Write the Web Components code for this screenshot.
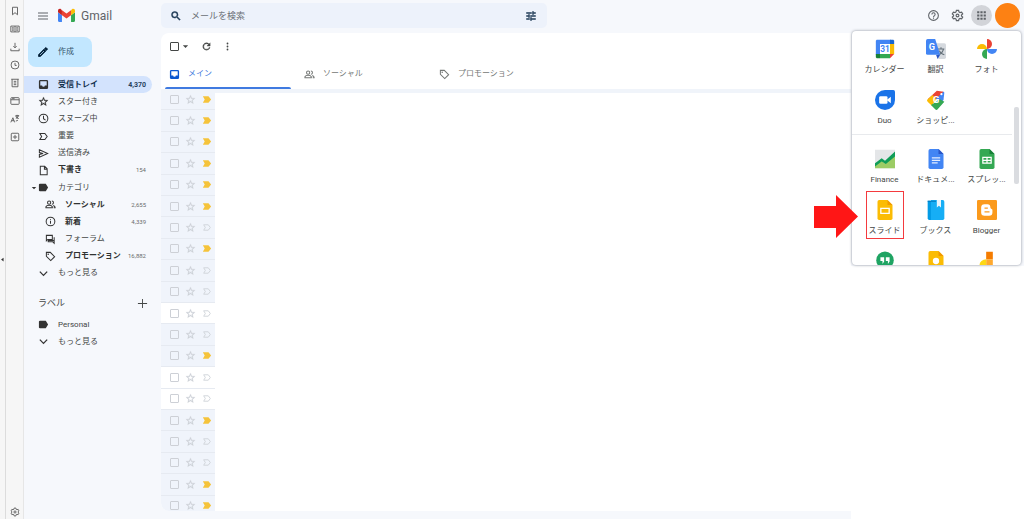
<!DOCTYPE html>
<html lang="ja">
<head>
<meta charset="utf-8">
<title>Gmail</title>
<style>
body { margin: 0; background: #fff; color: #444746; font: 8px/12px Roboto, "Noto Sans CJK JP", sans-serif; }
</style>
</head>
<body>
<mail-app></mail-app>
<script>
const ICONS = {
  bookmark: '<path class="s" d="M6 3h12v18l-6-5-6 5z"/>',
  book: '<path class="s" d="M2 5h20v14H2zM12 5v14M5 9h4M5 12h4M5 15h4M15 9h4M15 12h4M15 15h4"/>',
  download: '<path class="s" d="M12 2v12M8 10l4 4 4-4M2 16v5h20v-5"/>',
  history: '<rect class="s" x="3" y="3" width="18" height="18" rx="7"/><path class="s" d="M12 7v6h4"/>',
  notes: '<path class="s" d="M3 3h18M5 3v18h14V3M9 8h6M9 12h6M9 16h6"/>',
  window: '<rect class="s" x="2" y="4" width="20" height="16" rx="2"/><path class="s" d="M2 9h20M5 6.500h6"/>',
  lang: '<path class="s" d="M2 20l5-11 4 11M4 16h6M13 4h9M17 2v9M14 10c4-1 6-3 6-6M14 5c1 3 4 5 7 6M14 17l5-2"/>',
  plusbox: '<rect class="s" x="3" y="3" width="18" height="18" rx="2"/><path class="s" d="M12 7v10M7 12h10"/>',
  menu: '<path d="M2 5h20v2H2zm0 6h20v2H2zm0 6h20v2H2z"/>',
  search: '<path d="M15.500 14h-.79l-.28-.27A6.470 6.470 0 0 0 16 9.500 6.500 6.500 0 1 0 9.500 16c1.610 0 3.090-.59 4.230-1.570l.27.28v.79l5 4.990L20.490 19l-4.990-5zm-6 0a4.500 4.500 0 1 1 0-9 4.500 4.500 0 0 1 0 9z" stroke="currentColor" stroke-width="1"/>',
  tune: '<path d="M3 17v2h6v-2H3zM3 5v2h10V5H3zm10 16v-2h8v-2h-8v-2h-2v6h2zM7 9v2H3v2h4v2h2V9H7zm14 4v-2H11v2h10zm-6-4h2V7h4V5h-4V3h-2v6z" stroke="currentColor" stroke-width="1"/>',
  help: '<path d="M11 18h2v-2h-2v2zm1-16a10 10 0 1 0 0 20 10 10 0 0 0 0-20zm0 18a8 8 0 1 1 0-16 8 8 0 0 1 0 16zm0-14a4 4 0 0 0-4 4h2a2 2 0 1 1 4 0c0 2-3 1.750-3 5h2c0-2.250 3-2.500 3-5a4 4 0 0 0-4-4z"/>',
  gear: '<path class="s" d="M10 2.500h4l.7 3 1.900 1.100 3-.9 2 3.500-2.300 2.100v1.400l2.300 2.100-2 3.500-3-.9-1.900 1.100-.7 3h-4l-.7-3-1.900-1.100-3 .9-2-3.500 2.300-2.100v-1.400L2.400 9.200l2-3.500 3 .9 1.900-1.100z"/><circle class="s" cx="12" cy="12" r="2.600"/>',
  grid: '<path d="M4 8h4V4H4zm6 12h4v-4h-4zm-6 0h4v-4H4zm0-6h4v-4H4zm6 0h4v-4h-4zm6-10v4h4V4zm-6 4h4V4h-4zm6 6h4v-4h-4zm0 6h4v-4h-4z"/>',
  pencil: '<path d="M3 17.250V21h3.750L17.810 9.940l-3.750-3.750L3 17.250zM20.710 7.040a1 1 0 0 0 0-1.410l-2.340-2.340a1 1 0 0 0-1.410 0l-1.830 1.830 3.750 3.750 1.830-1.830z" stroke="currentColor" stroke-width="1.500"/><path d="M6 18L14 10" stroke="#c2e7ff" stroke-width="1.500"/>',
  inbox: '<path fill-rule="evenodd" d="M5 2h14a3 3 0 0 1 3 3v14a3 3 0 0 1-3 3H5a3 3 0 0 1-3-3V5a3 3 0 0 1 3-3zm0 3v9h4a3 3 0 0 0 6 0h4V5z"/>',
  star: '<path d="M22 9.240l-7.190-.62L12 2 9.190 8.630 2 9.240l5.460 4.730L5.820 21 12 17.270 18.180 21l-1.630-7.030L22 9.240zM12 15.400l-3.760 2.270 1-4.280-3.320-2.880 4.380-.38L12 6.100l1.710 4.040 4.380.38-3.320 2.880 1 4.280L12 15.400z" stroke="currentColor" stroke-width=".6"/>',
  clock: '<circle class="s" cx="12" cy="12" r="9.500"/><path class="s" d="M12 6v6.500l4.500 3"/>',
  important: '<path class="s" d="M4 5.500h11l5 6.500-5 6.500H4L8 12z"/>',
  importantFill: '<path d="M2 4h13.500l6.500 8-6.500 8H2l4.500-8z"/>',
  send: '<path class="s" d="M3 4l18 8-18 8v-6l8-2-8-2z"/>',
  draft: '<path class="s" d="M5 2.500h9.500L20 8v13.500H5zM14 3v6h6"/>',
  tag: '<path d="M2 5.500A2.500 2.500 0 0 1 4.500 4H17l5 8-5 8H4.500A2.500 2.500 0 0 1 2 18.500z"/>',
  people: '<circle class="s" cx="9" cy="8" r="3.500"/><path class="s" d="M2 19v-2c1-2.500 4-3.500 7-3.500s6 1 7 3.500v2zM15 4.500a3.500 3.500 0 0 1 0 7M18 14c2 .8 4 2 4 4v1h-3"/>',
  info: '<circle class="s" cx="12" cy="12" r="9.500"/><path class="s" d="M12 11v6M12 7v2"/>',
  forum: '<path class="s" d="M3 3h13v9H6l-3 3z"/><path class="s" d="M20 7v13l-3-3H7v-3h13" />',
  offer: '<path class="s" d="M3 3h8.500L21 12.500 12.500 21 3 11.500z"/><circle cx="7" cy="7" r="1.700"/>',
  down: '<path fill="none" stroke="currentColor" stroke-width="2.800" d="M4 8l8 8 8-8"/>',
  caret: '<path d="M3 8h18l-9 9z"/>',
  left: '<path d="M17 3v18L5 12z"/>',
  add: '<path d="M11 2h2v9h9v2h-9v9h-2v-9H2v-2h9z"/>',
  refresh: '<path d="M17.650 6.350A8 8 0 1 0 19.730 14h-2.080A6 6 0 1 1 12 6c1.660 0 3.140.69 4.220 1.780L13 11h7V4l-2.350 2.350z" stroke="currentColor" stroke-width=".8"/>',
  more: '<circle cx="12" cy="4" r="2.400"/><circle cx="12" cy="12" r="2.400"/><circle cx="12" cy="20" r="2.400"/>',
  gmail: '<path fill="#4285f4" d="M1.600 21h4V11.500L0 7.300v12.100C0 20.300.7 21 1.600 21z"/><path fill="#34a853" d="M18.400 21h4c.9 0 1.600-.7 1.600-1.600V7.300l-5.600 4.200z"/><path fill="#fbbc04" d="M18.400 4.500v7L24 7.300V5.200c0-2.200-2.400-3.400-4.200-2.100z"/><path fill="#ea4335" d="M5.600 11.500v-7l6.400 4.800 6.400-4.800v7L12 16.300z"/><path fill="#c5221f" d="M0 5.200v2.100l5.600 4.200v-7L4.200 3.100C2.400 1.800 0 3 0 5.200z"/>',
  calendar: '<path fill="#4285f4" d="M2 1h17v5H6v13H1V2z"/><path fill="#1967d2" d="M18 1h4l1 1v4h-5z"/><path fill="#fbbc04" d="M18 6h5v12h-5z"/><path fill="#34a853" d="M6 18h12v5H6z"/><path fill="#188038" d="M1 18h5v5H2l-1-1z"/><path fill="#ea4335" d="M18 18h5l-5 5z"/><path fill="#fff" d="M6 6h12v12H6z"/><text x="12" y="16" text-anchor="middle" font-size="10" font-weight="700" fill="#4285f4">31</text>',
  translate: '<path fill="#d5d9de" d="M11 5h11a2 2 0 0 1 2 2v15a2 2 0 0 1-2 2h-7z"/><path fill="none" stroke="#647079" stroke-width="1.300" d="M14 12h8M18 10v2M21 12c-1 4-3 6-6 7M16 14c1 3 3 4 6 5"/><path fill="#2a56c6" d="M12 19h5l-3 5z"/><path fill="#4285f4" d="M2 0h9l6 19H2a2 2 0 0 1-2-2V2a2 2 0 0 1 2-2z"/><text x="7" y="13" text-anchor="middle" font-size="11" font-weight="700" fill="#fff">G</text>',
  photos: '<path fill="#ea4335" d="M12 0a6 6 0 0 1 6 6 6 6 0 0 1-6 6z"/><path fill="#4285f4" d="M24 12a6 6 0 0 1-12 0z"/><path fill="#34a853" d="M12 24a6 6 0 0 1 0-12z"/><path fill="#fbbc04" d="M0 12a6 6 0 0 1 12 0z"/>',
  duo: '<path fill="#1a73e8" d="M12 0h10a2 2 0 0 1 2 2v10A12 12 0 1 1 12 0z"/><rect x="5" y="7.500" width="10" height="9" rx="1.500" fill="#fff"/><path fill="#fff" d="M14 12l5-4v8z"/>',
  shopping: '<path fill="#4285f4" d="M13 3l8-1 1 1-1 9-4 4-8-8z"/><path fill="#ea4335" d="M2 11L13 1l8 1-10 9-4 5z"/><path fill="#fbbc04" d="M2 11a2 2 0 0 0 0 3l5 5 5-8-4-5z"/><path fill="#34a853" d="M6 18l5 5a2 2 0 0 0 3 0l8-9-5-3z"/><circle cx="18.500" cy="5" r="1.300" fill="#fff"/><text x="12" y="16" text-anchor="middle" font-size="11" font-weight="700" fill="#fff">G</text>',
  finance: '<path fill="#e4e6e8" d="M0 1h24v22H0z"/><path fill="#9ccc65" d="M0 20l7-6 5 3 12-9v15H0z"/><path fill="#0f9d58" d="M0 17l8-6 4 3L24 3v6l-11 9-5-3-8 6z"/>',
  docs: '<path fill="#4285f4" d="M5 0h10l6 6v16a2 2 0 0 1-2 2H5a2 2 0 0 1-2-2V2a2 2 0 0 1 2-2z"/><path fill="#2a56c6" d="M15 0l6 6h-6z"/><path fill="#e3edff" d="M7 10h10v1.400H7zm0 3h10v1.400H7zm0 3h7v1.400H7z"/>',
  sheets: '<path fill="#34a853" d="M5 0h10l6 6v16a2 2 0 0 1-2 2H5a2 2 0 0 1-2-2V2a2 2 0 0 1 2-2z"/><path fill="#188038" d="M15 0l6 6h-6z"/><path fill="none" stroke="#fff" stroke-width="1.500" d="M7 10h10v7H7zM12 10v7M7 13.500h10"/>',
  slides: '<path fill="#fbbc04" d="M5 0h10l6 6v16a2 2 0 0 1-2 2H5a2 2 0 0 1-2-2V2a2 2 0 0 1 2-2z"/><path fill="#f29900" d="M15 0l6 6h-6z"/><path fill="none" stroke="#fff" stroke-width="1.600" d="M7 10h10v6H7z"/>',
  books: '<path fill="#039be5" d="M2 1h4v23H4a2 2 0 0 1-2-2z"/><path fill="#16aef5" d="M6 0h14a2 2 0 0 1 2 2v20a2 2 0 0 1-2 2H6z"/><path fill="#0277bd" d="M2 1h10v1H2z"/><path fill="#e8f5fd" d="M13 0h5v9l-2.500-2L13 9z"/>',
  blogger: '<rect y="0" width="24" height="24" rx="1.500" fill="#fb9a1c"/><path fill="#fff" fill-rule="evenodd" d="M9 5h3.500A3.500 3.500 0 0 1 16 8.500c0 1.500.5 2 1.500 2.200.8.200 1 .6 1 1.300v3a4 4 0 0 1-4 4H9a4 4 0 0 1-4-4V9a4 4 0 0 1 4-4zm0 4v1.500h4V9zm0 4.500V15h6v-1.500z"/>',
  hangouts: '<circle cx="12" cy="11" r="10.500" fill="#1fa463"/><path fill="#fff" d="M6.500 7.500h4.500v5l-2 3v-3.500H6.500zM13 7.500h4.500v5l-2 3v-3.500H13z"/>',
  keep: '<path fill="#fbbc04" d="M5 0h10l6 6v18H3V2a2 2 0 0 1 2-2z"/><path fill="#f29900" d="M15 0l6 6h-6z"/><circle cx="12" cy="12" r="3.800" fill="#fff"/><path fill="#fff" d="M10 17h4v2h-4z"/>',
  jamboard: '<path fill="#f57c00" d="M11 1h8v9h-8z"/><path fill="#ffa92e" d="M11 10h8v9h-8z"/><path fill="#fdd815" d="M11 10v14a8 7 0 0 1 0-14z"/>'
};

function define(name, render) {
  customElements.define(name, class extends HTMLElement {
    constructor() { super(); this.attachShadow({ mode: 'open' }); }
    connectedCallback() {
      const t = document.createElement('template');
      t.innerHTML = render(this);
      this.shadowRoot.replaceChildren(t.content.cloneNode(true));
    }
  });
}
const RESET = 'button{all:unset;box-sizing:border-box;cursor:pointer}a{color:inherit;text-decoration:none}';

define('g-icon', el => `<style>
  :host{display:block;flex:none;width:11px;height:11px}
  svg{display:block;width:100%;height:100%;fill:currentColor;font-family:Roboto,sans-serif}
  .s{fill:none;stroke:currentColor;stroke-width:2.200}
  </style><svg viewBox="0 0 24 24" aria-hidden="true">${ICONS[el.getAttribute('name')]}</svg>`);

define('side-rail', () => `<style>${RESET}
  :host{display:flex;background:#f6f6f6;color:#5c5c5c}
  .edge{width:5px;border-right:1px solid #dcdcdc;display:flex;align-items:center;color:#333}
  .edge g-icon{width:5px;height:5px}
  .tools{flex:1;display:flex;flex-direction:column;align-items:center;gap:8px;padding:6px 0 2px;border-right:1px solid #e6e6e6}
  button g-icon{width:10px;height:10px}
  button:last-child{margin-top:auto}
  </style><div class="edge"><g-icon name="left"></g-icon></div><div class="tools">
  ${['bookmark','book','download','history','notes','window','lang','plusbox','gear'].map(n => `<button aria-label="${n}"><g-icon name="${n}"></g-icon></button>`).join('')}
  </div>`);

define('top-bar', () => `<style>${RESET}
  :host{display:flex;align-items:center;height:31px}
  .brand{display:flex;align-items:center;width:124px;padding-left:13px}
  .brand button{color:#5f6368}
  .menu{width:12px;height:12px}
  .logo{width:17px;height:17px;margin:0 6px 0 9px}
  .name{font:12px/18px Roboto,sans-serif;color:#5f6368}
  form{display:flex;align-items:center;gap:9px;width:386px;height:25px;box-sizing:border-box;padding:0 10px 0 9px;border-radius:5px;background:#edf2fb;color:#1f3a56}
  form g-icon{width:12px;height:12px}
  input{flex:1;min-width:0;border:0;padding:0;background:none;outline:0;font:9px/14px Roboto,"Noto Sans CJK JP",sans-serif}
  input::placeholder{color:#6a6f76;opacity:1}
  .right{margin-left:auto;display:flex;align-items:center;color:#5f6368;padding-right:4px}
  .right>button>g-icon{width:13px;height:13px}
  .gear{margin:0 6px 0 11px}
  .apps{display:flex;justify-content:center;align-items:center;width:21px;height:21px;border-radius:50%;background:#d2d4d9;margin:0 3px 0 1px}
  .avatar{width:25px;height:25px;border-radius:50%;background:#fd8113}
  </style>
  <div class="brand"><button aria-label="メニュー"><g-icon class="menu" name="menu"></g-icon></button><g-icon class="logo" name="gmail"></g-icon><span class="name">Gmail</span></div>
  <form role="search"><button type="button" aria-label="検索"><g-icon name="search"></g-icon></button><input aria-label="メールを検索" placeholder="メールを検索"><button type="button" aria-label="オプション"><g-icon name="tune"></g-icon></button></form>
  <div class="right"><button aria-label="ヘルプ"><g-icon name="help"></g-icon></button><button class="gear" aria-label="設定"><g-icon name="gear"></g-icon></button><button class="apps" aria-label="アプリ"><g-icon name="grid"></g-icon></button><button class="avatar" aria-label="アカウント"></button></div>`);

define('nav-item', el => `<style>${RESET}
  :host{display:block;min-height:0;margin-right:9px}
  a{position:relative;display:flex;align-items:center;height:100%;box-sizing:border-box;padding:0 6px 0 14px;border-radius:0 9px 9px 0}
  :host([sub]) a{padding-left:21px}
  :host([strong]) .t{font-weight:700;color:#303231}
  :host([active]) a{background:#d3e3fd;color:#001d35}
  :host([active]) .t{color:#13304d}
  :host([active]) .n{font-size:7px;font-weight:700;color:#27425e}
  g-icon{color:#333}
  .t{flex:1;margin-left:9px;white-space:nowrap}
  .n{font-size:6px;color:#6a6d6c}
  .c{position:absolute;left:7px;width:6px;height:6px}
  </style><a href="#">${el.hasAttribute('open') ? '<g-icon class="c" name="caret"></g-icon>' : ''}<g-icon name="${el.getAttribute('icon')}"></g-icon><span class="t"><slot></slot></span><span class="n">${el.getAttribute('count') || ''}</span></a>`);

define('mail-nav', () => `<style>${RESET}
  :host{display:block;padding-top:6px}
  .compose{display:flex;align-items:center;gap:9px;width:64px;height:30px;margin:0 0 9px 4px;padding-left:9px;border-radius:8px;background:#c2e7ff;color:#001d35}
  .compose span{color:#33536c}
  .compose g-icon{width:12px;height:12px}
  nav{display:grid;grid-template-columns:minmax(0,1fr);grid-auto-rows:1fr;height:206px}
  .labels{height:34px}
  h2{display:flex;align-items:center;justify-content:space-between;margin:14px 13px 6px 14px;font:9px/14px Roboto,"Noto Sans CJK JP",sans-serif}
  </style>
  <button class="compose"><g-icon name="pencil"></g-icon><span>作成</span></button>
  <nav>
  <nav-item active strong icon="inbox" count="4,370">受信トレイ</nav-item>
  <nav-item icon="star">スター付き</nav-item>
  <nav-item icon="clock">スヌーズ中</nav-item>
  <nav-item icon="important">重要</nav-item>
  <nav-item icon="send">送信済み</nav-item>
  <nav-item strong icon="draft" count="154">下書き</nav-item>
  <nav-item open icon="tag">カテゴリ</nav-item>
  <nav-item sub strong icon="people" count="2,655">ソーシャル</nav-item>
  <nav-item sub strong icon="info" count="4,339">新着</nav-item>
  <nav-item sub icon="forum">フォーラム</nav-item>
  <nav-item sub strong icon="offer" count="16,882">プロモーション</nav-item>
  <nav-item icon="down">もっと見る</nav-item>
  </nav>
  <h2>ラベル<button aria-label="ラベルを作成"><g-icon name="add"></g-icon></button></h2>
  <nav class="labels"><nav-item icon="tag">Personal</nav-item><nav-item icon="down">もっと見る</nav-item></nav>`);

define('mail-tab', el => `<style>${RESET}
  :host{display:block;width:135px;color:#747775}
  button{position:relative;display:flex;align-items:center;gap:8px;width:100%;height:30px;padding-left:8px}
  :host([active]){color:#0b57d0}
  :host([active]) button::after{content:"";position:absolute;left:4px;bottom:0;width:126px;height:2px;border-radius:2px 2px 0 0;background:#3f7ae0}
  :host([active]) span{color:#3b76dc}
  </style><button role="tab"><g-icon name="${el.getAttribute('icon')}"></g-icon><span><slot></slot></span></button>`);

define('mail-row', el => `<style>${RESET}
  :host{display:flex;align-items:center;gap:6px;width:54px;box-sizing:border-box;padding-left:9px;background:#f0f4fb;border-bottom:1px solid #e6eaf1;color:#cfd3d9}
  :host([unread]){background:#fff}
  input{appearance:none;flex:none;width:9px;height:9px;margin:0;border:1px solid #cdd0d6;border-radius:1px}
  .i g-icon{width:10px}
  :host([marked]) .i{color:#f5c33b}
  </style><input type="checkbox" aria-label="選択"><button aria-label="スター"><g-icon name="star"></g-icon></button><button class="i" aria-label="重要"><g-icon name="${el.hasAttribute('marked') ? 'importantFill' : 'important'}"></g-icon></button>`);

define('mail-card', () => `<style>${RESET}
  :host{display:flex;flex-direction:column;min-height:0;overflow:hidden;background:#fff;border-radius:8px 0 0 8px}
  .bar{display:flex;align-items:center;height:26px;padding-left:9px;color:#444746}
  .bar input{appearance:none;width:9px;height:9px;margin:0;border:1px solid #444746;border-radius:1px}
  .bar .v{width:7px;height:7px;margin:0 12px 0 3px}
  .bar .m{margin-left:11px}
  .bar .m g-icon{width:9px;height:9px}
  .tabs{display:flex}
  .list{flex:1;min-height:0;overflow:hidden;border-top:4px solid #f0f4fa}
  .rows{display:grid;grid-auto-rows:1fr;height:428px;margin-top:-4px}
  </style>
  <div class="bar"><input type="checkbox" aria-label="すべて選択"><g-icon class="v" name="caret"></g-icon><button aria-label="更新"><g-icon name="refresh"></g-icon></button><button class="m" aria-label="その他"><g-icon name="more"></g-icon></button></div>
  <div class="tabs" role="tablist"><mail-tab active icon="inbox">メイン</mail-tab><mail-tab icon="people">ソーシャル</mail-tab><mail-tab icon="offer">プロモーション</mail-tab></div>
  <div class="list"><div class="rows">${[...'YYYYYY-Y--W-YWWY--YY'].map(c => `<mail-row ${c === 'Y' ? 'marked' : c === 'W' ? 'unread' : ''}></mail-row>`).join('')}</div></div>`);

define('app-tile', el => `<style>${RESET}
  :host{display:block;position:relative;height:44px}
  a{display:flex;flex-direction:column;align-items:center;gap:4px}
  g-icon{width:20px;height:20px}
  span{line-height:14px;white-space:nowrap}
  :host([boxed])::after{content:"";position:absolute;left:7px;top:-9px;width:36px;height:46px;border:1px solid #f43a3e}
  </style><a href="#"><g-icon name="${el.getAttribute('icon')}"></g-icon><span><slot></slot></span></a>`);

define('apps-panel', () => `<style>
  :host{display:block;position:relative;height:234px;margin:0 3px 0 1px}
  .box{position:relative;height:100%;box-sizing:border-box;padding-top:8px;overflow:hidden;background:#fff;border-radius:4px;box-shadow:0 0 3px #8b919c}
  section{display:grid;grid-template-columns:repeat(3,51px);row-gap:7px;padding-left:7px}
  section+section{margin-right:9px;border-top:1px solid #e8eaed;padding-top:14px}
  .thumb{position:absolute;right:2px;top:76px;width:5px;height:77px;border-radius:2px;background:#dadce0}
  .arrow{position:absolute;left:-38px;top:164px;width:44px;height:43px;fill:#ff1616}
  </style><div class="box">
  <section><app-tile icon="calendar">カレンダー</app-tile><app-tile icon="translate">翻訳</app-tile><app-tile icon="photos">フォト</app-tile><app-tile icon="duo">Duo</app-tile><app-tile icon="shopping">ショッピ...</app-tile></section>
  <section><app-tile icon="finance">Finance</app-tile><app-tile icon="docs">ドキュメ...</app-tile><app-tile icon="sheets">スプレッ...</app-tile><app-tile boxed icon="slides">スライド</app-tile><app-tile icon="books">ブックス</app-tile><app-tile icon="blogger">Blogger</app-tile><app-tile icon="hangouts"></app-tile><app-tile icon="keep"></app-tile><app-tile icon="jamboard"></app-tile></section>
  <div class="thumb"></div></div>
  <svg class="arrow" viewBox="0 0 44 43" aria-hidden="true"><path d="M0 11h22V0l22 21.500L22 43V33H0z"/></svg>`);

define('mail-app', () => `<style>
  :host{display:grid;grid-template:31px minmax(0,1fr) / 24px 137px minmax(0,1fr) 173px;height:calc(100vh - 4px);background:#f6f8fc}
  side-rail{grid-row:1 / 3}
  top-bar{grid-column:2 / 5}
  mail-card{margin:2px 0 8px}
  .side{display:flex;flex-direction:column}
  .blank{flex:1;margin-top:1px;background:#fff}
  </style><side-rail></side-rail><top-bar></top-bar><mail-nav></mail-nav><mail-card></mail-card>
  <div class="side"><apps-panel></apps-panel><div class="blank"></div></div>`);
</script>
</body>
</html>
